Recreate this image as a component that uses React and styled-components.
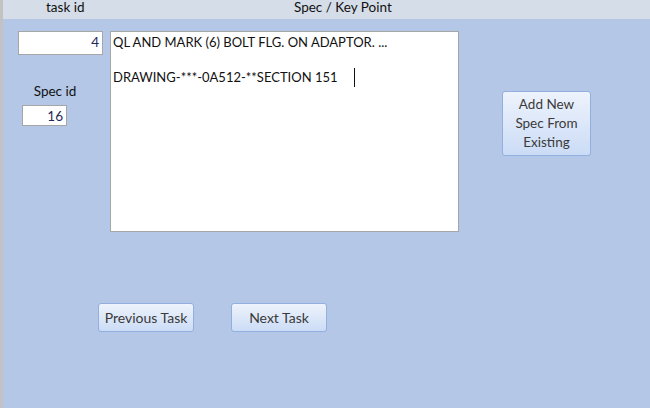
import React from "react";
import styled, { createGlobalStyle } from "styled-components";

const Global = createGlobalStyle`
  html, body { margin: 0; padding: 0; }
  body {
    background: #b4c7e6;
    font-family: Lato, "Open Sans", "Liberation Sans", sans-serif;
    font-size: 13px;
    color: #111;
  }
`;

const Page = styled.div`
  width: 650px;
  height: 408px;
  box-sizing: border-box;
  border-left: 3px solid #c2c2c2;
  background: #b4c7e6;
  display: flex;
  flex-direction: column;
  overflow: hidden;
`;

const Header = styled.div`
  height: 19px;
  background: #d5dde8;
  display: grid;
  grid-template-columns: 43px 42px 206px 200px;
  align-items: start;
  font-size: 13.5px;
  line-height: 14px;
  color: #111;
`;

const HeaderLabel = styled.div`
  grid-column: ${(p) => p.$col};
  padding-top: 0;
  white-space: nowrap;
`;

const Main = styled.div`
  display: flex;
  align-items: flex-start;
  padding: 12px 0 0 15px;
`;

const LeftCol = styled.div`
  width: 85px;
  display: flex;
  flex-direction: column;
  align-items: center;
`;

const Field = styled.div`
  box-sizing: border-box;
  width: ${(p) => p.$w}px;
  height: ${(p) => p.$h}px;
  background: #fff;
  border: 1px solid #a6a6a6;
  text-align: right;
  padding: 1px 3px 0 0;
  color: #1f2a5a;
  font-size: 13.5px;
  line-height: 18px;
  align-self: ${(p) => p.$align || "center"};
  margin-left: ${(p) => p.$ml || 0}px;
`;

const Label = styled.div`
  margin-top: 28px;
  margin-bottom: 6px;
  font-size: 13.5px;
  margin-left: -11px;
`;

const TextBox = styled.div`
  box-sizing: border-box;
  width: 349px;
  height: 201px;
  margin-left: 7px;
  background: #fff;
  border: 1px solid #a6a6a6;
  padding: 0 0 0 2px;
  font-size: 13px;
  color: #111;
`;

const Line = styled.div`
  white-space: nowrap;
  height: 35px;
  line-height: 20px;
`;

const Caret = styled.span`
  display: inline-block;
  width: 1px;
  height: 19px;
  background: #111;
  margin-left: 16px;
  vertical-align: -5px;
`;

const Button = styled.button`
  box-sizing: border-box;
  width: ${(p) => p.$w}px;
  height: ${(p) => p.$h}px;
  border: 1px solid #93afe0;
  border-radius: 3px;
  background: linear-gradient(#eef3fc, #cbdcf6);
  font-family: inherit;
  font-size: ${(p) => p.$fs || 13}px;
  color: #3a3a3a;
  line-height: 19px;
  padding: 0;
  cursor: pointer;
`;

const SideButton = styled(Button)`
  margin-left: 43px;
  margin-top: 60px;
`;

const ButtonRow = styled.div`
  display: flex;
  gap: 37px;
  padding-left: 95px;
  margin-top: 71px;
`;

export default function App() {
  return (
    <>
      <Global />
      <Page>
        <Header>
          <HeaderLabel $col={2}>task id</HeaderLabel>
          <HeaderLabel $col={4}>Spec / Key Point</HeaderLabel>
        </Header>
        <Main>
          <LeftCol>
            <Field $w={85} $h={24}>4</Field>
            <Label>Spec id</Label>
            <Field $w={45} $h={21} $align="flex-start" $ml={4}>16</Field>
          </LeftCol>
          <TextBox>
            <Line>QL AND MARK (6) BOLT FLG. ON ADAPTOR. ...</Line>
            <Line>
              DRAWING-***-0A512-**SECTION 151<Caret />
            </Line>
          </TextBox>
          <SideButton $w={89} $h={65} $fs={13.5}>
            Add New
            <br />
            Spec From
            <br />
            Existing
          </SideButton>
        </Main>
        <ButtonRow>
          <Button $w={96} $h={29} $fs={14}>Previous Task</Button>
          <Button $w={96} $h={29} $fs={14}>Next Task</Button>
        </ButtonRow>
      </Page>
    </>
  );
}
